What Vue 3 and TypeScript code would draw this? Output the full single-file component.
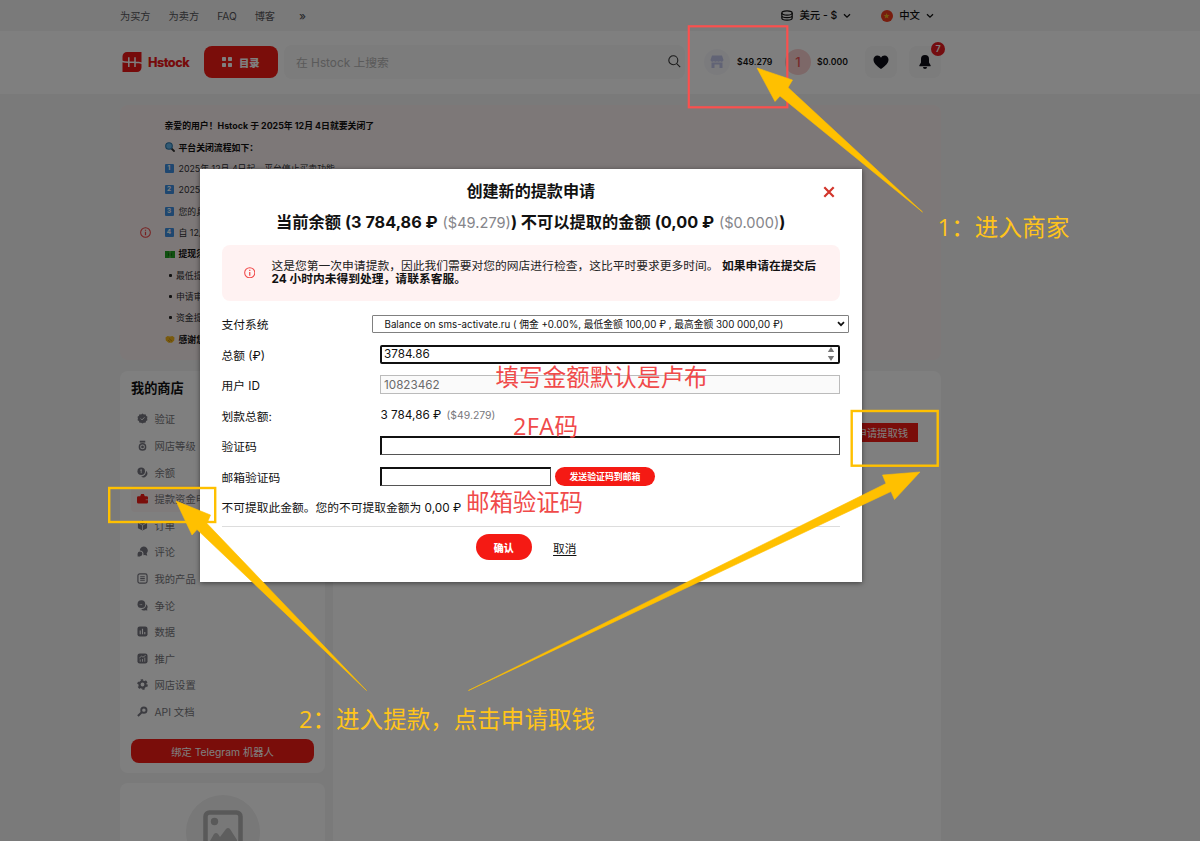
<script setup lang="ts">
import { ref } from 'vue'

interface MenuItem { label: string; icon: string; active?: boolean }
interface NoticeLine { text: string; kind: 'plain' | 'search' | 'num' | 'cash' | 'dot' | 'hands'; bold?: boolean; num?: number }

const topLinks: string[] = ['为买方', '为卖方', 'FAQ', '博客']

const notice: NoticeLine[] = [
  { kind: 'plain', text: '亲爱的用户！Hstock 于 2025年 12月 4日就要关闭了', bold: true },
  { kind: 'search', text: '平台关闭流程如下：', bold: true },
  { kind: 'num', num: 1, text: '2025年 12月 4日起，平台停止买卖功能' },
  { kind: 'num', num: 2, text: '2025年' },
  { kind: 'num', num: 3, text: '您的具' },
  { kind: 'num', num: 4, text: '自 12月' },
  { kind: 'cash', text: '提现须知', bold: true },
  { kind: 'dot', text: '最低提现' },
  { kind: 'dot', text: '申请审核' },
  { kind: 'dot', text: '资金提取' },
  { kind: 'hands', text: '感谢您', bold: true },
]

const menu: MenuItem[] = [
  { label: '验证', icon: 'check' },
  { label: '网店等级', icon: 'medal' },
  { label: '余额', icon: 'coins' },
  { label: '提款资金申请', icon: 'wallet', active: true },
  { label: '订单', icon: 'box' },
  { label: '评论', icon: 'review' },
  { label: '我的产品', icon: 'list' },
  { label: '争论', icon: 'chat' },
  { label: '数据', icon: 'bars' },
  { label: '推广', icon: 'trend' },
  { label: '网店设置', icon: 'gear' },
  { label: 'API 文档', icon: 'key' },
]

const amount = ref('3784.86')
const userId = ref('10823462')
const code = ref('')
const mailCode = ref('')
</script>

<template>
  <div class="page">
    <div class="topbar">
      <div class="wrap top-row">
        <nav class="links">
          <a v-for="l in topLinks" :key="l">{{ l }}</a>
          <a class="more">»</a>
        </nav>
        <div class="locale">
          <svg class="coin" viewBox="0 0 12 11"><g fill="none" stroke="#111" stroke-width="1.2"><ellipse cx="6" cy="3" rx="5.2" ry="2.2" /><path d="M.8 3v5c0 1.2 2.3 2.2 5.2 2.2S11.200 9.200 11.200 8V3M.8 5.500c0 1.200 2.300 2.100 5.200 2.100s5.200-.9 5.200-2.100" /></g></svg>
          <span>美元 - $</span>
          <svg class="chev" viewBox="0 0 8 6"><path d="M1 1.200l3 3 3-3" fill="none" stroke="#111" stroke-width="1.300" /></svg>
          <svg class="flag" viewBox="0 0 12 12"><circle cx="6" cy="6" r="6" fill="#f03a1c" /><path d="M5.600 3l.8 2.100h2.200L6.900 6.500l.6 2.100-1.900-1.200-1.900 1.200.6-2.100-1.700-1.400h2.200z" fill="#f0b020" /></svg>
          <span>中文</span>
          <svg class="chev" viewBox="0 0 8 6"><path d="M1 1.200l3 3 3-3" fill="none" stroke="#111" stroke-width="1.300" /></svg>
        </div>
      </div>
    </div>

    <header class="header">
      <div class="wrap head-row">
        <div class="logo">
          <svg viewBox="0 0 20 20"><path d="M5 0h14.500v15.500a4.500 4.500 0 0 1-4.500 4.500H.5V4.500A4.500 4.500 0 0 1 5 0z" fill="#ed1616" /><path d="M-.5 9.200c2 .9 4 1 7 1h6.500c3 0 5 .1 7.500 1.200M6.800 5.200v9.800M13 5.200v9.800" fill="none" stroke="#fff" stroke-width="1.500" /></svg>
          <b>Hstock</b>
        </div>
        <button class="catalog">
          <svg viewBox="0 0 10 10" fill="#fff"><rect width="4" height="4" rx=".7" /><rect x="6" width="4" height="4" rx=".7" /><rect y="6" width="4" height="4" rx=".7" /><rect x="6" y="6" width="4" height="4" rx=".7" /></svg>
          目录
        </button>
        <div class="search">
          <span>在 Hstock 上搜索</span>
          <svg viewBox="0 0 13 13"><g fill="none" stroke="#333" stroke-width="1.100"><circle cx="5.300" cy="5.300" r="4.500" /><path d="M8.700 8.700l3.500 3.500" /></g></svg>
        </div>
        <div class="balance shop">
          <i><svg viewBox="0 0 14 14" fill="#c2c6ea"><path d="M2 .5h10L13.500 5a2 2 0 0 1-3.500 1 2 2 0 0 1-3 0 2 2 0 0 1-3 0A2 2 0 0 1 .5 5zM1.500 7.500h11v5.500h-3v-3.500h-5V13h-3z" /></svg></i>
          <span>$49.279</span>
        </div>
        <div class="balance red">
          <i>1</i><span>$0.000</span>
        </div>
        <div class="tile heart">
          <svg viewBox="0 0 16 14"><path d="M8 14C3 10.500.5 8 .5 4.600.5 2.200 2.200.5 4.400.5 6 .5 7.300 1.400 8 2.700 8.700 1.400 10 .5 11.600.5c2.200 0 3.900 1.700 3.900 4.100C15.500 8 13 10.500 8 14z" fill="#0c0c16" /></svg>
        </div>
        <div class="tile bell">
          <svg viewBox="0 0 12 14"><path d="M6 0a4 4 0 0 0-4 4v3.500L.4 10.200c-.3.600 0 1.100.6 1.100h10c.6 0 .9-.5.6-1.100L10 7.500V4a4 4 0 0 0-4-4zM4 12a2 2 0 0 0 4 0z" fill="#0c0c16" /></svg>
          <em>7</em>
        </div>
      </div>
    </header>

    <div class="wrap content">
      <section class="notice">
        <svg class="info" viewBox="0 0 12 12"><circle cx="6" cy="6" r="5.300" fill="none" stroke="#f04040" stroke-width="1.100" /><path d="M6 5.300v3.700M6 2.900v1.300" stroke="#f04040" stroke-width="1.300" /></svg>
        <div class="lines">
          <div v-for="(n, k) in notice" :key="k" class="line" :class="{ bold: n.bold }">
            <svg v-if="n.kind === 'search'" class="emo" viewBox="0 0 10 10"><path d="M6 6l3 3" stroke="#333" stroke-width="1.800" stroke-linecap="round" /><circle cx="4" cy="4" r="3.300" fill="#65b5e8" stroke="#2c75a8" stroke-width="1.100" /></svg>
            <b v-else-if="n.kind === 'num'" class="keycap">{{ n.num }}</b>
            <svg v-else-if="n.kind === 'cash'" class="emo" viewBox="0 0 10 10"><rect y="2" width="10" height="7" fill="#21a121" /><circle cx="5" cy="5.500" r="2" fill="#0c6c10" /><path d="M4 2h2v7H4z" fill="#6fc85c" opacity=".5" /></svg>
            <i v-else-if="n.kind === 'dot'" class="dot"></i>
            <svg v-else-if="n.kind === 'hands'" class="emo" viewBox="0 0 10 10"><path d="M.5 3.500l2-1.500 2.500.5 2.500-.5 2 1.500-.3 3L7 8.700H3.500L.8 6.500z" fill="#f2b51c" /><path d="M4 4.500l3 2.700M3 6l2 2" stroke="#a87008" stroke-width=".6" /></svg>
            <span>{{ n.text }}</span>
          </div>
        </div>
      </section>

      <div class="columns">
        <aside class="side">
          <section class="card shop-menu">
            <h3>我的商店</h3>
            <ul>
              <li v-for="m in menu" :key="m.label" :class="{ active: m.active }">
                <svg viewBox="0 0 12 12" class="mi" fill="currentColor">
                  <template v-if="m.icon === 'check'"><path d="M6 .5l1.500 1 1.800-.1.600 1.700 1.500 1L11 6l.4 1.800-1.500 1-.6 1.800-1.800-.1L6 11.500l-1.500-1-1.800.1-.6-1.800-1.500-1L1 6 .6 4.100l1.500-1 .6-1.700 1.800.1z" /><path d="M4 6l1.500 1.500L8.200 4.700" fill="none" stroke="#fff" /></template>
                  <template v-else-if="m.icon === 'medal'"><path d="M3 .8h6v2H3z" /><circle cx="6" cy="7.500" r="4.200" /><circle cx="6" cy="7.500" r="2.600" fill="#fff" /><circle cx="6" cy="7.500" r="1.500" /></template>
                  <template v-else-if="m.icon === 'coins'"><circle cx="4.600" cy="4.600" r="4.100" /><path d="M9.800 4a4 4 0 1 1-5.500 6.200c3 .4 5.800-2.500 5.500-6.200z" /><path d="M4.600 2.500v4.200M3.500 3.500h1.600" stroke="#fff" stroke-width=".9" /></template>
                  <template v-else-if="m.icon === 'wallet'"><path d="M1.500 3.500h2L4.500 1h3l1 2.500h2A1.500 1.500 0 0 1 12 5v5a1.500 1.500 0 0 1-1.500 1.500h-9A1.500 1.500 0 0 1 0 10V5a1.500 1.500 0 0 1 1.500-1.500z" /><path d="M9.500 6.500H12v1.500H9.500z" fill="#f77" /></template>
                  <template v-else-if="m.icon === 'box'"><path d="M6 .5l5 2.500v6l-5 2.500L1 9V3z" /><path d="M1.500 3.300L6 5.700l4.500-2.400M6 5.700V11" fill="none" stroke="#fff" stroke-width=".8" /></template>
                  <template v-else-if="m.icon === 'review'"><path d="M3 5a4.400 4.400 0 1 1 7.500 3l.7 2.500-2.600-.8L7 10c.5-3-1-5-4-5z" /><circle cx="3.300" cy="8.500" r="2.600" /><path d="M.7 8.500v3h3z" /></template>
                  <template v-else-if="m.icon === 'list'"><rect x="1" y="1" width="10" height="10" rx="2" fill="none" stroke="currentColor" stroke-width="1.300" /><path d="M3.500 4h5M3.500 6h5M3.500 8h5" stroke="currentColor" stroke-width="1.100" /></template>
                  <template v-else-if="m.icon === 'chat'"><circle cx="4.800" cy="4.600" r="4.200" /><path d="M10 4.500a4 4 0 0 1 1 5l.3 2-2-.4A4 4 0 0 1 4.500 10C8 10 10.200 7.500 10 4.500z" /><path d="M3 5h.9M4.700 5h.9" stroke="#fff" /></template>
                  <template v-else-if="m.icon === 'bars'"><rect x=".5" y=".5" width="11" height="11" rx="2.500" /><path d="M3.500 5v4M6 3v6M8.500 6.500V9" stroke="#fff" stroke-width="1.200" /></template>
                  <template v-else-if="m.icon === 'trend'"><rect x=".5" y=".5" width="11" height="11" rx="2.500" /><path d="M2.500 5.500l2.500-2 1.500 1L9.500 2.500M3.500 7v2.500M6 6.500v3M8.500 5v4.500" fill="none" stroke="#fff" stroke-width=".9" /></template>
                  <template v-else-if="m.icon === 'gear'"><circle cx="6" cy="6" r="3.300" fill="none" stroke="currentColor" stroke-width="2.400" /><circle cx="6" cy="6" r="4.900" fill="none" stroke="currentColor" stroke-width="1.800" stroke-dasharray="2.600 2.530" /></template>
                  <template v-else><circle cx="7.500" cy="4.500" r="2.900" fill="none" stroke="currentColor" stroke-width="2" /><path d="M5.500 6.500L1 11" stroke="currentColor" stroke-width="2.200" /></template>
                </svg>
                <span>{{ m.label }}</span>
              </li>
            </ul>
            <button class="telegram">绑定 Telegram 机器人</button>
          </section>
          <section class="card avatar-card">
            <div class="avatar">
              <svg viewBox="0 0 40 44"><rect x="2.500" y="2.500" width="35" height="44" rx="4" fill="none" stroke="#b2b2b2" stroke-width="4.500" /><circle cx="11.500" cy="11.500" r="3.700" fill="#b2b2b2" /><path d="M7 31l4-7q2-2 4 0l2 3 6-8q2-2 4 0l7 11v15H7z" fill="#bcbcbc" /></svg>
            </div>
          </section>
        </aside>
        <main class="card main">
          <button class="withdraw">申请提取钱</button>
        </main>
      </div>
    </div>

    <div class="overlay">
      <div class="modal">
        <svg class="close" viewBox="0 0 12 12"><path d="M1.300 1.300l9.400 9.400M10.700 1.300L1.300 10.700" stroke="#d2352b" stroke-width="2.200" /></svg>
        <h2>创建新的提款申请</h2>
        <h2 class="sum">当前余额 (3 784,86 ₽ <small>($49.279)</small>) 不可以提取的金额 (0,00 ₽ <small>($0.000)</small>)</h2>
        <div class="alert">
          <svg viewBox="0 0 12 12"><circle cx="6" cy="6" r="5.300" fill="none" stroke="#f04848" stroke-width="1.100" /><path d="M6 5.300v3.700M6 2.900v1.300" stroke="#f04848" stroke-width="1.300" /></svg>
          <p>这是您第一次申请提款，因此我们需要对您的网店进行检查，这比平时要求更多时间。 <b>如果申请在提交后<br>24 小时内未得到处理，请联系客服。</b></p>
        </div>
        <div class="row">
          <label>支付系统</label>
          <div class="select">
            <span>Balance on sms-activate.ru ( 佣金 +0.00%, 最低金额 100,00 ₽ , 最高金额 300 000,00 ₽)</span>
            <svg viewBox="0 0 8 6"><path d="M1 1.200l3 3 3-3" fill="none" stroke="#111" stroke-width="1.700" /></svg>
          </div>
        </div>
        <div class="row">
          <label>总额 (₽)</label>
          <div class="field focus">
            <input v-model="amount">
            <svg viewBox="0 0 8 16" fill="#777"><path d="M4 1l3.200 5H.8zM4 15l3.200-5H.8z" /></svg>
          </div>
        </div>
        <div class="row"><label>用户 ID</label><div class="field disabled"><input v-model="userId" disabled></div></div>
        <div class="row"><label>划款总额:</label><p class="value">3 784,86 ₽ <small>($49.279)</small></p></div>
        <div class="row"><label>验证码</label><div class="field inset"><input v-model="code"></div></div>
        <div class="row">
          <label>邮箱验证码</label>
          <div class="field inset short"><input v-model="mailCode"></div>
          <button class="send">发送验证码到邮箱</button>
        </div>
        <div class="row hint">不可提取此金额。您的不可提取金额为 0,00 ₽</div>
        <div class="actions">
          <button class="ok">确认</button>
          <a>取消</a>
        </div>
      </div>
    </div>

    <svg class="marks" viewBox="0 0 1200 841">
      <rect x="688.800" y="26.300" width="98.500" height="81" fill="none" stroke="#fb504e" stroke-width="2.200" />
      <g fill="none" stroke="#ffc000" stroke-width="2.400">
        <rect x="109.200" y="488" width="106" height="34" />
        <rect x="851.700" y="411" width="86" height="54.700" />
      </g>
      <g fill="#ffc000" stroke="#ffc000" stroke-width=".6">
        <path d="M757 68l35.500 12-4.500 7.500L922.500 212 780 96l-5 5.500z" />
        <path d="M176 501l34.500 14-3.500 8.500L366.500 690.500 197 529.500l-5 5.500z" />
        <path d="M920 472l-25.500 27.500-3.500-8L468.500 690.500l417.500-207-3.500-8.500z" />
      </g>
      <g class="note yellow">
        <text x="937.500" y="236" textLength="132">1：进入商家</text>
        <text x="299" y="728" textLength="296">2：进入提款，点击申请取钱</text>
      </g>
      <g class="note red-text">
        <text x="495.500" y="385.500" textLength="212">填写金额默认是卢布</text>
        <text x="513" y="435" textLength="65">2FA码</text>
        <text x="466" y="511" textLength="117">邮箱验证码</text>
      </g>
    </svg>
  </div>
</template>

<style>
body { margin: 0; }
</style>

<style scoped>
* { box-sizing: border-box; }
.page { position: relative; width: 1200px; height: 841px; overflow: hidden; background: #f5f5f5; color: #111; font-family: Inter, "Noto Sans CJK SC", sans-serif; font-size: 10.200px; }
button { border: 0; padding: 0; margin: 0; font-family: inherit; color: #fff; background: #f51a14; }
h2, h3, p, ul { margin: 0; padding: 0; }
svg { display: block; flex: none; }
.wrap { width: 821px; margin-left: 120px; }
.topbar { height: 31px; background: #f5f5f5; }
.top-row { display: flex; justify-content: space-between; align-items: center; height: 31px; line-height: 16px; }
.links { display: flex; gap: 18px; color: #55555a; }
.links .more { margin-left: 6px; font-weight: 500; font-size: 11.500px; }
.locale { display: flex; align-items: center; font-weight: 500; font-size: 10.400px; padding-right: 7px; }
.coin { width: 12px; height: 11px; margin-right: 6.500px; }
.chev { width: 8px; height: 6px; margin-left: 6px; }
.flag { width: 12px; height: 12px; margin: 0 6px 0 30px; }
.header { height: 63px; background: #fff; }
.head-row { display: flex; align-items: center; height: 62px; }
.logo { display: flex; align-items: center; width: 84px; padding-left: 2px; color: #ed1616; }
.logo svg { width: 20px; height: 20px; margin-right: 6px; }
.logo b { font-size: 12.700px; letter-spacing: -.55px; font-weight: 800; }
.catalog { display: flex; align-items: center; justify-content: center; gap: 7px; width: 73.500px; height: 32px; border-radius: 8px; font-size: 10.300px; font-weight: 800; }
.catalog svg { width: 10px; height: 10px; }
.search { display: flex; align-items: center; justify-content: space-between; width: 401px; height: 34px; margin-left: 6.500px; padding: 0 4px 1px 12px; background: #f8f8f8; border-radius: 8px; color: #b4b4b4; font-size: 11.800px; }
.search svg { width: 13px; height: 13px; }
.balance { display: flex; align-items: center; font-size: 8.700px; font-weight: 600; }
.balance i { display: flex; align-items: center; justify-content: center; width: 26px; height: 26px; border-radius: 50%; font-style: normal; }
.shop { margin-left: 19px; width: 81px; }
.shop i { background: #f7f7fb; margin-right: 7px; }
.shop svg { width: 14px; height: 14px; }
.red { width: 80px; }
.red i { background: #fbd0d0; color: #ee5555; font-size: 13px; font-weight: 500; margin-right: 6px; }
.tile { position: relative; display: flex; align-items: center; justify-content: center; width: 32px; height: 32px; border-radius: 8px; background: #f8f8f8; }
.heart svg { width: 16px; height: 14px; }
.bell { margin-left: 12px; }
.bell svg { width: 12px; height: 14px; }
.bell em { position: absolute; top: -4.500px; right: -4px; width: 14px; height: 14px; border-radius: 50%; background: #e81a20; color: #fff; font: 600 9px/14px Inter, sans-serif; text-align: center; }
.content { padding-top: 11px; }
.notice { display: flex; align-items: center; height: 255px; padding-left: 20px; background: #fbf0f0; border-radius: 8px; }
.info { width: 11px; height: 11px; margin-right: 13.500px; }
.line { display: flex; align-items: center; height: 21.350px; font-size: 8.850px; white-space: nowrap; color: #303036; }
.bold { font-weight: 700; color: #111; }
.emo { width: 10px; height: 10px; margin-right: 4px; }
.keycap { width: 9px; height: 9px; margin-right: 5px; background: #3f8fe0; color: #fff; font-size: 6.500px; line-height: 9px; text-align: center; border-radius: 1px; }
.dot { width: 3px; height: 3px; margin: 0 4.500px 0 4px; background: #222; border-radius: 1px; }
.columns { display: flex; gap: 8px; padding-top: 11px; }
.side { width: 205px; }
.card { background: #fff; border-radius: 8px; }
.shop-menu { height: 402px; padding: 7px 11px 0; }
h3 { font-size: 13.200px; line-height: 20px; height: 27.700px; }
li { display: flex; align-items: center; height: 26.600px; padding-left: 6px; color: #77777c; font-size: 10.300px; list-style: none; white-space: nowrap; }
li.active { background: #fff7f7; border-radius: 4px; }
li.active .mi { color: #f51a14; }
.mi { width: 11px; height: 11px; margin-right: 6.500px; color: #777780; }
.telegram { display: block; width: 183px; height: 24px; margin-top: 14.200px; border-radius: 8px; font-size: 10.300px; }
.avatar-card { display: flex; justify-content: center; height: 100px; margin-top: 10px; padding-top: 12px; }
.avatar { display: flex; justify-content: center; width: 74px; height: 74px; padding-top: 15px; border-radius: 50%; background: #f0f0f0; overflow: hidden; }
.avatar svg { width: 40px; height: 44px; }
.main { display: flex; justify-content: flex-end; align-items: flex-start; width: 608px; height: 600px; padding: 52px 23px 0 0; }
.withdraw { width: 74px; height: 19px; font-size: 10.300px; text-align: right; padding-right: 10px; }
.overlay { position: absolute; inset: 0; padding: 169px 0 0 199.500px; background: rgba(0, 0, 0, .5); }
.modal { position: relative; width: 662.500px; height: 413px; padding: 10.500px 22px 0; background: #fff; box-shadow: 0 1px 5px rgba(0, 0, 0, .5); font-size: 11.750px; }
.close { position: absolute; top: 16.700px; right: 27px; width: 12px; height: 12px; }
h2 { font-size: 16.100px; line-height: 22px; height: 22px; font-weight: 700; text-align: center; white-space: nowrap; }
.sum { margin-top: 9px; font-size: 16.250px; }
.sum small { font-size: 14.600px; font-weight: 400; color: #85858a; margin-left: 1px; }
.alert { display: flex; align-items: center; height: 56px; margin-top: 12px; padding-left: 22px; background: #fff2f2; border-radius: 8px; line-height: 13.500px; font-size: 11.780px; }
.alert svg { width: 11.500px; height: 11.500px; margin-right: 16.500px; }
.alert p { white-space: nowrap; color: #222; padding-top: 1px; }
.alert b { color: #111; }
.row { display: flex; align-items: center; height: 30.500px; }
.alert + .row { margin-top: 8px; }
.row label { width: 158.500px; flex: none; }
.select { display: flex; align-items: center; justify-content: space-between; flex: none; width: 477px; height: 17.500px; margin-left: -8.500px; padding: 0 2.500px 0 12px; border: 1px solid #808080; border-radius: 1px; font-size: 9.750px; white-space: nowrap; }
.select svg { width: 8px; height: 6px; }
.field { display: flex; align-items: center; width: 460px; height: 19px; border: 1px solid #bbb; }
.field input { flex: 1; min-width: 0; width: 100%; height: 100%; padding: 0 2px; border: 0; outline: 0; background: none; color: #111; font: 11.700px Inter, sans-serif; }
.field svg { width: 8px; height: 16px; margin-right: 3px; }
.focus { border: 2px solid #101010; border-radius: 2px; }
.disabled { background: #fafafa; }
.disabled input { color: #6a6a6a; padding-left: 3px; }
.inset { border: 2px solid #111; border-right-color: #555; border-bottom-color: #555; border-right-width: 1px; border-bottom-width: 1px; }
.short { width: 171px; }
.send { width: 100px; height: 18.500px; margin-left: 4px; border-radius: 10px; font-size: 8.900px; font-weight: 700; }
.value { white-space: nowrap; padding: 0 0 1px .5px; }
.value small { margin-left: 2px; font-size: 10.400px; color: #77777c; }
.actions { display: flex; align-items: center; justify-content: center; gap: 21px; height: 43px; margin-top: 3.500px; padding: 0 9.500px 1px 0; border-top: 1px solid #ddd; font-size: 11.700px; }
.actions a { text-decoration: underline; text-underline-offset: 2px; }
.ok { width: 56.500px; height: 26px; border-radius: 13px; font-size: 10px; font-weight: 900; }
.marks { position: absolute; inset: 0; width: 1200px; height: 841px; }
.note { font-family: "Open Sans", "Noto Sans CJK SC", sans-serif; font-size: 23.500px; font-weight: 400; }
.yellow { fill: #ffc41a; }
.red-text { fill: #f04a4a; }
</style>
